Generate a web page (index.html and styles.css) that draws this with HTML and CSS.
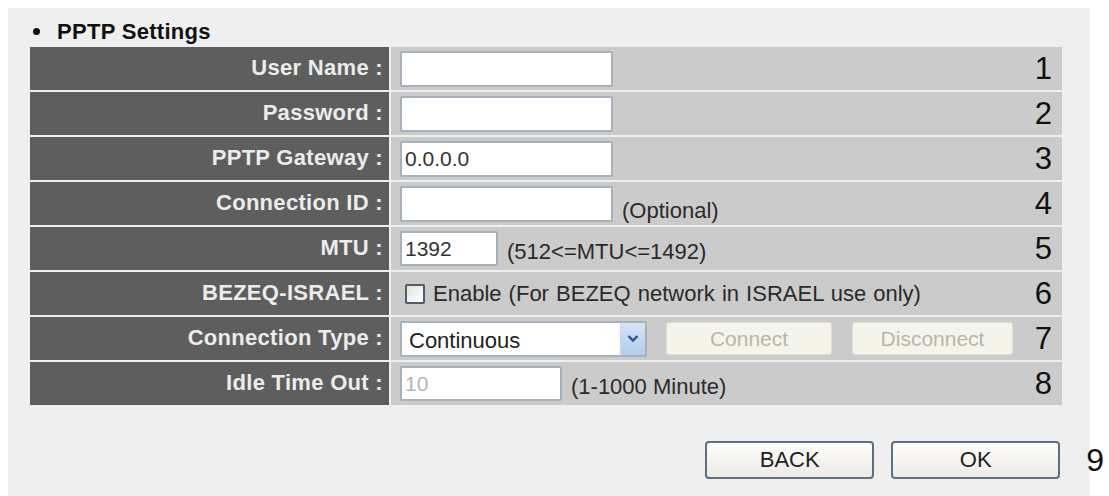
FILE: index.html
```html
<!DOCTYPE html>
<html lang="en">
<head>
  <meta charset="UTF-8" />
  <title>PPTP Settings</title>
  <link rel="stylesheet" href="styles.css">
</head>
<body>

  <div class="panel">
    <h3 class="section-title"><span class="bullet"></span>PPTP Settings</h3>

    <!-- Settings table -->
    <div class="settings">
      <div class="label">User Name :</div>
      <div class="value">
        <input class="field field-wide" type="text" />
        <span class="step">1</span>
      </div>

      <div class="label">Password :</div>
      <div class="value">
        <input class="field field-wide" type="password" />
        <span class="step">2</span>
      </div>

      <div class="label">PPTP Gateway :</div>
      <div class="value">
        <input class="field field-wide" type="text" value="0.0.0.0" />
        <span class="step">3</span>
      </div>

      <div class="label">Connection ID :</div>
      <div class="value">
        <input class="field field-wide" type="text" />
        <span class="hint hint-low">(Optional)</span>
        <span class="step">4</span>
      </div>

      <div class="label">MTU :</div>
      <div class="value">
        <input class="field field-short" type="text" value="1392" />
        <span class="hint">(512&lt;=MTU&lt;=1492)</span>
        <span class="step">5</span>
      </div>

      <div class="label">BEZEQ-ISRAEL :</div>
      <div class="value">
        <label class="check">
          <input type="checkbox" />
          Enable (For BEZEQ network in ISRAEL use only)
        </label>
        <span class="step">6</span>
      </div>

      <div class="label">Connection Type :</div>
      <div class="value">
        <div class="select-wrap">
          <select class="select">
            <option>Continuous</option>
            <option>Connect On Demand</option>
            <option>Manual</option>
          </select>
          <span class="select-arrow">
            <svg width="12" height="9" viewBox="0 0 12 9">
              <path d="M1.5 2 L6 6.5 L10.5 2" fill="none" stroke="#2b4f8c" stroke-width="2.4"/>
            </svg>
          </span>
        </div>
        <button class="btn-off btn-connect" disabled>Connect</button>
        <button class="btn-off btn-disconnect" disabled>Disconnect</button>
        <span class="step">7</span>
      </div>

      <div class="label">Idle Time Out :</div>
      <div class="value">
        <input class="field field-mid field-dim" type="text" value="10" />
        <span class="hint">(1-1000 Minute)</span>
        <span class="step">8</span>
      </div>
    </div>

    <div class="actions">
      <button class="btn">BACK</button>
      <button class="btn">OK</button>
      <span class="step step-outside">9</span>
    </div>
  </div>

</body>
</html>
```

FILE: styles.css
```css
* {
  box-sizing: border-box;
}

body {
  margin: 0;
  background-color: #fff;
  font-family: 'Liberation Sans', Arial, sans-serif;
  color: #222;
}

.panel {
  margin: 8px 0 0 8px;
  width: 1082px;
  height: 488px;
  padding: 11px 0 0 22px;
  background-color: #efefef;
}

.section-title {
  display: flex;
  align-items: center;
  margin: 0 0 3px;
  height: 25px;
  font-size: 22px;
  font-weight: bold;
  letter-spacing: 0.3px;
  color: #111;
}

.bullet {
  width: 7px;
  height: 7px;
  margin: 0 17px 0 3px;
  border-radius: 50%;
  background-color: #111;
}

/* Settings table */
.settings {
  display: grid;
  grid-template-columns: 359px 671px;
  grid-auto-rows: 43px;
  gap: 2px;
}

.label {
  display: flex;
  align-items: center;
  justify-content: flex-end;
  padding: 0 6px 1px 0;
  background-color: #5e5e5e;
  color: #ececec;
  font-size: 22px;
  font-weight: bold;
  letter-spacing: 0.3px;
}

.value {
  display: flex;
  align-items: center;
  padding: 0 10px 0 9px;
  background-color: #cbcbcb;
  font-size: 22px;
  color: #2a2a2a;
}

.step {
  margin-left: auto;
  font-size: 31px;
  line-height: 1;
  color: #111;
}

.field {
  height: 36px;
  padding: 0 3px;
  border: 2px solid #a7b1bc;
  border-radius: 2px;
  background-color: #fff;
  font-family: inherit;
  font-size: 21px;
  color: #333;
}

.field-wide {
  width: 213px;
}

.field-short {
  width: 98px;
  height: 35px;
}

.field-mid {
  width: 162px;
  height: 35px;
}

.field-dim {
  color: #b5b5b5;
}

.hint {
  margin: 6px 0 0 9px;
}

.hint-low {
  margin-top: 14px;
}

.check {
  display: flex;
  align-items: center;
  margin-left: 5px;
  word-spacing: 1px;
}

.check input {
  appearance: none;
  width: 20px;
  height: 20px;
  margin: 0 8px 0 0;
  border: 2px solid #4f5c6b;
  border-radius: 2px;
  background: linear-gradient(135deg, #e4e4e0, #fff);
}

/* Dropdown */
.select-wrap {
  position: relative;
  width: 247px;
  height: 36px;
}

.select {
  appearance: none;
  width: 100%;
  height: 100%;
  padding: 4px 0 0 7px;
  border: 2px solid #a7b1bc;
  border-radius: 2px;
  background-color: #fff;
  font-family: inherit;
  font-size: 22px;
  color: #222;
}

.select-arrow {
  position: absolute;
  top: 2px;
  right: 2px;
  bottom: 2px;
  width: 25px;
  display: flex;
  align-items: center;
  justify-content: center;
  background: linear-gradient(#d6e3f8, #b5cbee);
  border-left: 1px solid #c9d6ea;
}

.btn-off {
  height: 33px;
  margin-left: 19px;
  border: 1px solid #e0ded0;
  border-radius: 3px;
  background-color: #f5f4ea;
  font-family: inherit;
  font-size: 21px;
  color: #b7b6ac;
}

.btn-connect {
  width: 166px;
}

.btn-disconnect {
  width: 161px;
  margin-left: 20px;
}

/* Bottom buttons */
.actions {
  display: flex;
  align-items: center;
  justify-content: flex-end;
  width: 1074px;
  margin-top: 36px;
  gap: 17px;
}

.btn {
  width: 169px;
  height: 38px;
  border: 2px solid #5d6f80;
  border-radius: 4px;
  background: linear-gradient(#fdfdfc, #eceae4);
  font-family: inherit;
  font-size: 22px;
  color: #222;
}

.step-outside {
  margin-left: 9px;
  font-size: 32px;
}
```
